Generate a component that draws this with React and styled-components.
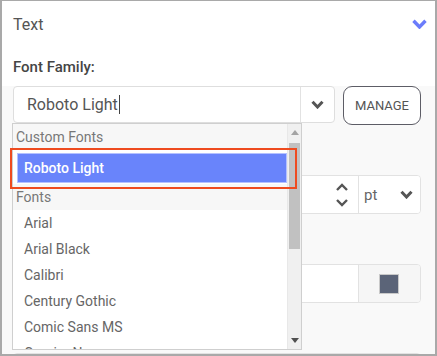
import React from "react";
import styled, { createGlobalStyle } from "styled-components";

const Global = createGlobalStyle`
  html, body { margin: 0; padding: 0; background: #fff; }
  body { font-family: Roboto, "Liberation Sans", sans-serif; }
  * { box-sizing: border-box; }
`;

const Panel = styled.div`
  width: 437px;
  height: 356px;
  border: 2px solid #a9a9a9;
  border-top-width: 1px;
  background: #f9f9f9;
  overflow: hidden;
`;

const Header = styled.div`
  height: 46px;
  display: flex;
  align-items: center;
  justify-content: space-between;
  padding: 0 8px 0 11px;
  background: #fff;
  color: #555;
  font-size: 16px;
`;

const Content = styled.div`
  padding: 0 14px 0 11px;
`;

const Top = styled.div`
  background: #fff;
  margin: 0 -14px 0 -11px;
  padding: 10px 14px 9px 11px;
`;

const Label = styled.div`
  font-size: 15px;
  font-weight: 500;
  color: #454545;
  line-height: 20px;
  margin: ${(p) => (p.$first ? "0" : "22px 0 8px")};
`;

const ComboRow = styled.div`
  display: flex;
  gap: 8px;
  align-items: flex-start;
`;

const ComboWrap = styled.div`
  position: relative;
  flex: 1;
`;

const Combo = styled.div`
  height: 37px;
  display: flex;
  background: #fff;
  border: 1px solid #dedede;
  border-radius: 4px;
`;

const ComboInput = styled.div`
  flex: 1;
  display: flex;
  align-items: center;
  padding-left: 13px;
  font-size: 16px;
  color: #555;
  border-right: 1px solid #e2e2e2;
`;

const Caret = styled.span`
  display: inline-block;
  width: 1px;
  height: 19px;
  background: #444;
  margin-left: 1px;
`;

const ArrowCell = styled.div`
  width: 33px;
  display: flex;
  align-items: center;
  justify-content: center;
`;

const ManageButton = styled.button`
  width: 78px;
  height: 39px;
  border: 1px solid #5d5d66;
  border-radius: 9px;
  background: #fff;
  color: #555;
  font-family: Roboto, "Liberation Sans", sans-serif;
  font-size: 13px;
  padding: 0;
`;

const Box = styled.div`
  height: 39px;
  display: flex;
  border: 1px solid #e2e2e2;
  border-radius: 4px;
  background: #fff;
  overflow: hidden;
`;

const BoxMain = styled.div`
  flex: 1;
  display: flex;
  align-items: center;
  justify-content: flex-end;
  padding-right: 9px;
  border-right: 1px solid #e2e2e2;
`;

const Side = styled.div`
  width: 61px;
  display: flex;
  align-items: center;
  justify-content: ${(p) => (p.$center ? "center" : "space-between")};
  padding: 0 7px 0 5px;
  background: ${(p) => (p.$grey ? "#f6f6f6" : "#fff")};
  color: #666;
  font-size: 15px;
`;

const Swatch = styled.div`
  width: 20px;
  height: 20px;
  background: #5b6478;
  border: 1px solid #c9c9c9;
`;

const Dropdown = styled.div`
  position: absolute;
  top: 100%;
  left: -1px;
  width: 290px;
  height: 227px;
  display: flex;
  background: #fff;
  border: 1px solid #cfcfcf;
  z-index: 5;
`;

const List = styled.div`
  flex: 1;
  overflow: hidden;
`;

const Group = styled.div`
  height: 26px;
  display: flex;
  align-items: center;
  padding-left: 3px;
  background: #f7f7f7;
  color: #777;
  font-size: 14px;
`;

const Option = styled.div`
  height: 26px;
  display: flex;
  align-items: center;
  padding-left: 11px;
  color: #666;
  font-size: 14px;
`;

const Selected = styled.div`
  height: 30px;
  margin: 3px 0 1px 4px;
  display: flex;
  align-items: center;
  padding-left: 6px;
  background: #6984fb;
  border: 1px solid #b4c1ff;
  color: #fff;
  font-size: 14px;
  font-weight: 500;
`;

const Scrollbar = styled.div`
  width: 14px;
  background: #f0f0f0;
  display: flex;
  flex-direction: column;
  align-items: center;
  border-left: 1px solid #e8e8e8;
`;

const ScrollArrow = styled.div`
  height: 17px;
  display: flex;
  align-items: center;
  justify-content: center;
`;

const Track = styled.div`
  flex: 1;
  width: 100%;
  padding: 2px 1px;
`;

const Thumb = styled.div`
  height: 106px;
  background: #c1c1c1;
`;

const Highlight = styled.div`
  position: absolute;
  left: -3px;
  top: 62px;
  width: 287px;
  height: 41px;
  border: 2px solid #ee4b1f;
  z-index: 6;
  pointer-events: none;
`;

const Chevron = ({ color, w = 13, h = 9, sw = 3 }) => (
  <svg width={w} height={h} viewBox={`0 0 ${w} ${h}`}>
    <path
      d={`M1.5 1.8 L${w / 2} ${h - 2} L${w - 1.5} 1.8`}
      fill="none"
      stroke={color}
      strokeWidth={sw}
    />
  </svg>
);

const Spinner = () => (
  <svg width="14" height="26" viewBox="0 0 14 26">
    <path d="M2 8 L7 3 L12 8" fill="none" stroke="#555" strokeWidth="2.4" />
    <path d="M2 18 L7 23 L12 18" fill="none" stroke="#555" strokeWidth="2.4" />
  </svg>
);

const Tri = ({ up }) => (
  <svg width="8" height="5" viewBox="0 0 8 5">
    <path d={up ? "M0 5 L4 0 L8 5 Z" : "M0 0 L8 0 L4 5 Z"} fill={up ? "#a3a3a3" : "#505050"} />
  </svg>
);

const fonts = ["Arial", "Arial Black", "Calibri", "Century Gothic", "Comic Sans MS", "Courier New"];

export default function App() {
  return (
    <>
      <Global />
      <Panel>
        <Header>
          <span>Text</span>
          <Chevron color="#6b7cfb" w={15} h={10} sw={3.4} />
        </Header>
        <Content>
          <Top>
            <Label $first>Font Family:</Label>
          </Top>
          <ComboRow>
            <ComboWrap>
              <Combo>
                <ComboInput>
                  Roboto Light
                  <Caret />
                </ComboInput>
                <ArrowCell>
                  <Chevron color="#555" />
                </ArrowCell>
              </Combo>
              <Dropdown>
                <List>
                  <Group>Custom Fonts</Group>
                  <Selected>Roboto Light</Selected>
                  <Group>Fonts</Group>
                  {fonts.map((f) => (
                    <Option key={f}>{f}</Option>
                  ))}
                </List>
                <Scrollbar>
                  <ScrollArrow>
                    <Tri up />
                  </ScrollArrow>
                  <Track>
                    <Thumb />
                  </Track>
                  <ScrollArrow>
                    <Tri />
                  </ScrollArrow>
                </Scrollbar>
              </Dropdown>
              <Highlight />
            </ComboWrap>
            <ManageButton>MANAGE</ManageButton>
          </ComboRow>

          <Label>Font Size:</Label>
          <Box>
            <BoxMain>
              <Spinner />
            </BoxMain>
            <Side>
              <span>pt</span>
              <Chevron color="#555" />
            </Side>
          </Box>

          <Label>Font Color:</Label>
          <Box>
            <BoxMain />
            <Side $grey $center>
              <Swatch />
            </Side>
          </Box>

          <Label>Style:</Label>
          <Box>
            <BoxMain />
            <Side $grey />
          </Box>
        </Content>
      </Panel>
    </>
  );
}
